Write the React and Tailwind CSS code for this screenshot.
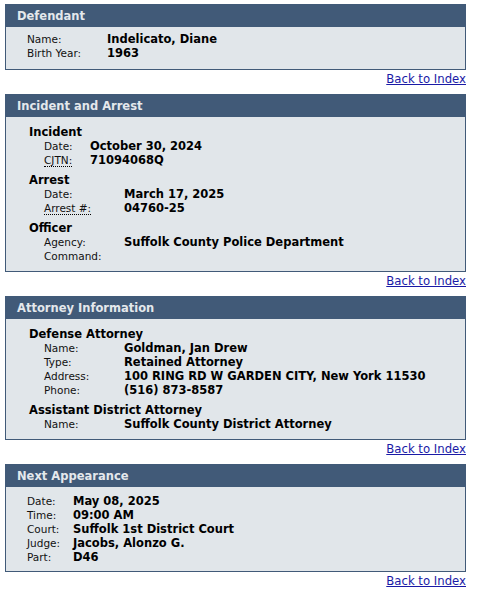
import React from 'react';

const font = { fontFamily: '"DejaVu Sans", Verdana, sans-serif' };

const Panel = ({ title, children }) => (
  <div className="w-[461px] border border-[#415a78] bg-[#e1e6ea]">
    <div className="h-[22px] bg-[#415a78] pl-[11px] text-[11.5px] font-bold leading-[22px] text-[#e4e8ec]">{title}</div>
    {children}
  </div>
);

const Back = () => (
  <div className="flex w-[461px] justify-end pt-[1px] pb-[7px]">
    <a href="#" className="text-[11.7px] leading-[16px] text-[#1a1aa6] underline">Back to Index</a>
  </div>
);

const Rows = ({ rows, labelW, pad }) => (
  <div className={pad}>
    {rows.map(([label, value, abbr]) => (
      <div key={label} className="flex h-[14px] items-center leading-[14px]">
        <div className={`${labelW} shrink-0 text-[10.5px] text-[#111]`}>
          {abbr ? <span className="border-b border-dotted border-black">{label}</span> : label}
        </div>
        <div className="text-[11.5px] font-bold text-black">{value}</div>
      </div>
    ))}
  </div>
);

const Group = ({ title, children }) => (
  <div className="pl-[23px]">
    <div className="text-[11.5px] font-bold leading-[14px] text-black">{title}</div>
    {children}
  </div>
);

export default function App() {
  return (
    <div style={font} className="bg-white pl-[5px] pt-[4px] min-h-[593px]">
      <Panel title="Defendant">
        <Rows
          pad="pl-[21px] pt-[5px] pb-[9px]"
          labelW="w-[80px]"
          rows={[['Name:', 'Indelicato, Diane'], ['Birth Year:', '1963']]}
        />
      </Panel>
      <Back />

      <Panel title="Incident and Arrest">
        <div className="flex flex-col gap-[6px] pt-[8px] pb-[8px]">
          <Group title="Incident">
            <Rows pad="pl-[15px]" labelW="w-[46px]" rows={[['Date:', 'October 30, 2024'], ['CJTN:', '71094068Q', true]]} />
          </Group>
          <Group title="Arrest">
            <Rows pad="pl-[15px]" labelW="w-[80px]" rows={[['Date:', 'March 17, 2025'], ['Arrest #:', '04760-25', true]]} />
          </Group>
          <Group title="Officer">
            <Rows pad="pl-[15px]" labelW="w-[80px]" rows={[['Agency:', 'Suffolk County Police Department'], ['Command:', '']]} />
          </Group>
        </div>
      </Panel>
      <Back />

      <Panel title="Attorney Information">
        <div className="flex flex-col gap-[6px] pt-[8px] pb-[8px]">
          <Group title="Defense Attorney">
            <Rows
              pad="pl-[15px]"
              labelW="w-[80px]"
              rows={[
                ['Name:', 'Goldman, Jan Drew'],
                ['Type:', 'Retained Attorney'],
                ['Address:', '100 RING RD W GARDEN CITY, New York 11530'],
                ['Phone:', '(516) 873-8587'],
              ]}
            />
          </Group>
          <Group title="Assistant District Attorney">
            <Rows pad="pl-[15px]" labelW="w-[80px]" rows={[['Name:', 'Suffolk County District Attorney']]} />
          </Group>
        </div>
      </Panel>
      <Back />

      <Panel title="Next Appearance">
        <Rows
          pad="pl-[21px] pt-[7px] pb-[7px]"
          labelW="w-[46px]"
          rows={[
            ['Date:', 'May 08, 2025'],
            ['Time:', '09:00 AM'],
            ['Court:', 'Suffolk 1st District Court'],
            ['Judge:', 'Jacobs, Alonzo G.'],
            ['Part:', 'D46'],
          ]}
        />
      </Panel>
      <Back />
    </div>
  );
}
